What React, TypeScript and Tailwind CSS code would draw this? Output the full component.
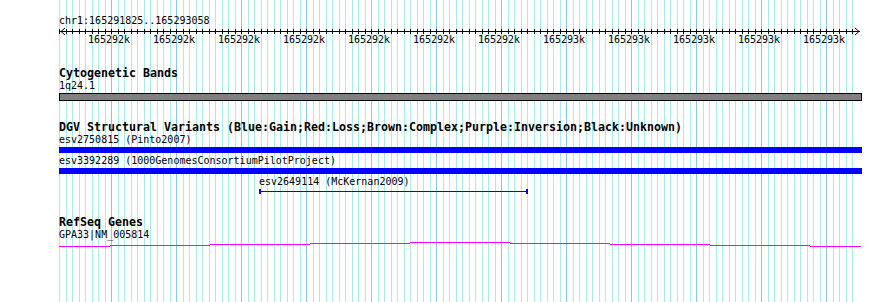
import React from "react";

const L = 59;
const STEP = 6.5;
const gridXs: { x: number; major: boolean }[] = [];
for (let k = 0; k <= 122; k++) {
  const x = Math.round(L + STEP * k);
  gridXs.push({ x, major: (k - 8) % 10 === 0 && k >= 8 });
}

const majorLabels = [
  "165292k", "165292k", "165292k", "165292k", "165292k", "165292k", "165292k",
  "165293k", "165293k", "165293k", "165293k", "165293k",
];

const mono = { fontFamily: '"DejaVu Sans Mono", "Liberation Mono", monospace' };

function Grid() {
  return (
    <svg className="absolute left-0 top-0" width={890} height={302} shapeRendering="crispEdges">
      {gridXs.map((g, i) => (
        <rect key={i} x={g.x} y={0} width={1} height={302} fill={g.major ? "#85c8ec" : "#a8ecee"} />
      ))}
    </svg>
  );
}

function Ruler() {
  const ticks = gridXs.map((g) => g.x);
  const majors = gridXs.filter((g) => g.major).map((g) => g.x);
  return (
    <svg width={890} height={18} className="-ml-[59px] block" style={mono}>
      <g shapeRendering="crispEdges">
        <rect x={60} y={4} width={800} height={1} fill="#000" />
        {ticks.map((x, i) => (
          <rect key={i} x={x} y={2} width={1} height={5} fill="#000" />
        ))}
      </g>
      <polyline points="65,1 61,4.5 65,8" fill="none" stroke="#000" strokeWidth={1} />
      <polyline points="855,1 859,4.5 855,8" fill="none" stroke="#000" strokeWidth={1} />
      {majors.map((x, i) => (
        <text key={i} x={x - 2} y={16} fontSize={10} textAnchor="middle" fill="#000">
          {majorLabels[i]}
        </text>
      ))}
    </svg>
  );
}

function Small({ children, className = "" }: { children: React.ReactNode; className?: string }) {
  return (
    <div className={`h-[12px] text-[10px] leading-[12px] text-black whitespace-nowrap ${className}`} style={mono}>
      {children}
    </div>
  );
}

function Title({ children, className = "" }: { children: React.ReactNode; className?: string }) {
  return (
    <div className={`h-[13px] text-[11.63px] leading-[13px] font-bold text-black whitespace-nowrap ${className}`} style={mono}>
      {children}
    </div>
  );
}

function GeneLine() {
  const segs = [
    [59, 110, 5],
    [110, 210, 4],
    [210, 310, 3],
    [310, 410, 2],
    [410, 510, 1],
    [510, 610, 2],
    [610, 710, 3],
    [710, 810, 4],
    [810, 861, 5],
  ];
  return (
    <svg width={890} height={7} className="-ml-[59px] block" shapeRendering="crispEdges">
      {segs.map(([a, b, y], i) => (
        <rect key={i} x={a} y={y} width={b - a} height={1} fill="#ff00ff" />
      ))}
    </svg>
  );
}

export default function App() {
  return (
    <div className="relative w-[890px] h-[302px] bg-white overflow-hidden">
      <Grid />
      <div className="relative flex flex-col pl-[59px]">
        <Small className="mt-[15px]">chr1:165291825..165293058</Small>
        <Ruler />
        <Title className="mt-[22px]">Cytogenetic Bands</Title>
        <Small>1q24.1</Small>
        <div className="mt-[1px] h-[8px] w-[803px] border border-black bg-[#808080]" />
        <Title className="mt-[20px]">
          DGV Structural Variants (Blue:Gain;Red:Loss;Brown:Complex;Purple:Inversion;Black:Unknown)
        </Title>
        <Small>esv2750815 (Pinto2007)</Small>
        <div className="mt-[1px] h-[6px] w-[803px] bg-[#0000ff]" />
        <Small className="mt-[2px]">esv3392289 (1000GenomesConsortiumPilotProject)</Small>
        <div className="mt-[1px] h-[6px] w-[803px] bg-[#0000ff]" />
        <Small className="mt-[2px] ml-[200px]">esv2649114 (McKernan2009)</Small>
        <div className="mt-[1px] ml-[200px] flex h-[5px] w-[269px] items-center">
          <div className="h-[5px] w-[2px] bg-[#0000ff]" />
          <div className="h-[1px] flex-1 bg-[#0000ff]" />
          <div className="h-[5px] w-[2px] bg-[#0000ff]" />
        </div>
        <Title className="mt-[22px]">RefSeq Genes</Title>
        <Small>GPA33|NM_005814</Small>
        <GeneLine />
      </div>
    </div>
  );
}
